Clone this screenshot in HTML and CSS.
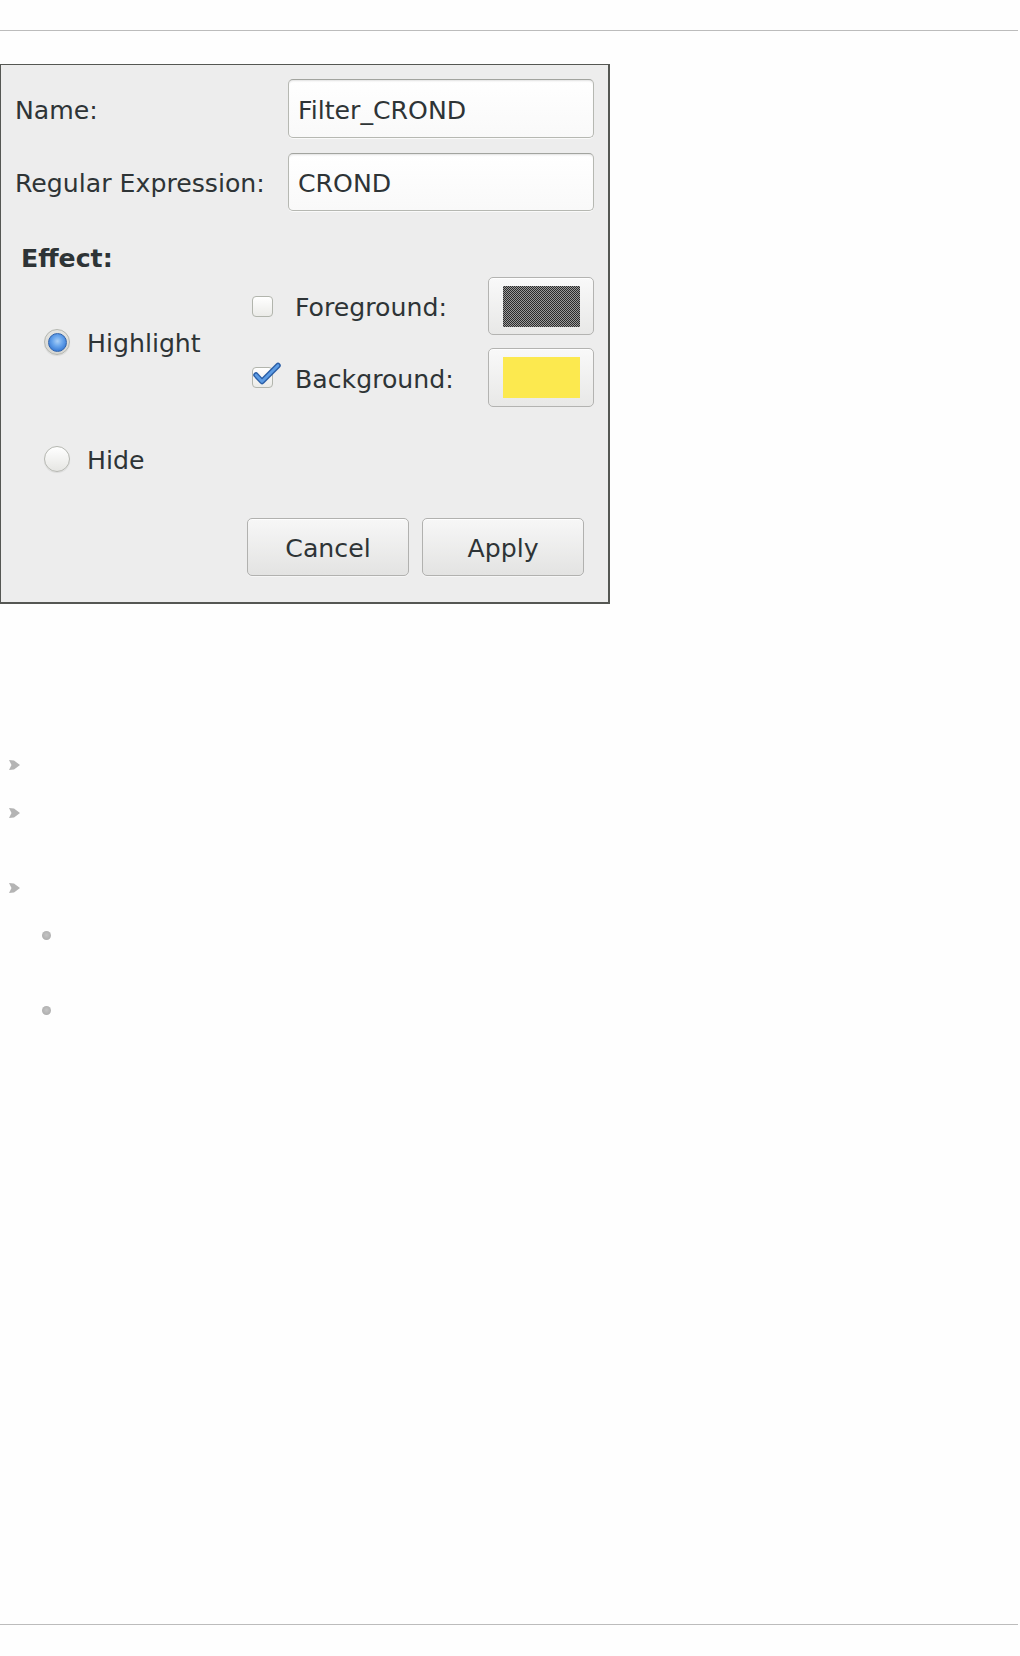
FILE: index.html
```html
<!DOCTYPE html>
<html lang="en">
<head>
<meta charset="utf-8">
<title>Filter</title>
<link rel="stylesheet" href="styles.css">
</head>
<body>
<div class="page">
  <div class="rule rule-top"></div>

  <div class="dialog">
    <div class="fields">
      <span class="field-label txt">Name:</span>
      <div class="entry">Filter_CROND</div>
      <span class="field-label txt">Regular Expression:</span>
      <div class="entry">CROND</div>
    </div>

    <div class="effect-title">Effect:</div>

    <div class="effect-body">
      <div class="radio-row">
        <span class="radio checked"><span class="dot"></span></span>
        <span class="txt">Highlight</span>
      </div>
      <div class="colors">
        <span class="check"></span>
        <span class="clabel txt">Foreground:</span>
        <span class="color-btn"><span class="swatch dither"></span></span>

        <span class="check checked">
          <svg class="tick" width="32" height="26" viewBox="0 0 32 26">
            <path d="M5 13 L11 19.5 L27 3.5" fill="none" stroke="#2b5ea6" stroke-width="5.5" stroke-linecap="round" stroke-linejoin="round"/>
            <path d="M5 13 L11 19.5 L27 3.5" fill="none" stroke="#5d9ce4" stroke-width="2.6" stroke-linecap="round" stroke-linejoin="round"/>
          </svg>
        </span>
        <span class="clabel txt">Background:</span>
        <span class="color-btn"><span class="swatch yellow"></span></span>
      </div>
    </div>

    <div class="radio-row hide-row">
      <span class="radio"></span>
      <span class="txt">Hide</span>
    </div>

    <div class="actions">
      <button class="btn" type="button">Cancel</button>
      <button class="btn" type="button">Apply</button>
    </div>
  </div>

  <ul class="list">
    <li class="item">
      <svg class="arrow" width="11" height="10" viewBox="0 0 11 10"><polygon points="0,0 5,0.5 11,5 5,9.5 0,10 2.5,5" fill="#b4b4b4"/></svg>
    </li>
    <li class="item tall">
      <svg class="arrow" width="11" height="10" viewBox="0 0 11 10"><polygon points="0,0 5,0.5 11,5 5,9.5 0,10 2.5,5" fill="#b4b4b4"/></svg>
    </li>
    <li class="item open">
      <svg class="arrow" width="11" height="10" viewBox="0 0 11 10"><polygon points="0,0 5,0.5 11,5 5,9.5 0,10 2.5,5" fill="#b4b4b4"/></svg>
      <ul class="sublist">
        <li class="subitem tall"><span class="circle"></span></li>
        <li class="subitem"><span class="circle"></span></li>
      </ul>
    </li>
  </ul>

  <div class="rule rule-bottom"></div>
</div>
</body>
</html>
```

FILE: styles.css
```css
html, body {
  margin: 0;
  padding: 0;
  background: #fefefe;
}

body {
  font-family: "DejaVu Sans", "Liberation Sans", sans-serif;
  font-size: 25.2px;
  line-height: 30px;
  color: #2e3436;
}

.page {
  display: flex;
  flex-direction: column;
  min-height: 1656px;
  box-sizing: border-box;
}

.rule {
  border-top: 1px solid #bcbcbc;
  margin-right: 2px;
}

.rule-top {
  margin-top: 30px;
}

.rule-bottom {
  margin-top: auto;
  margin-bottom: 31px;
}

/* text sits slightly low, as in the original toolkit font */
.txt {
  padding-top: 4px;
}

/* dialog */
.dialog {
  margin-top: 33px;
  width: 610px;
  box-sizing: border-box;
  background: #ededed;
  border-style: solid;
  border-color: #555753;
  border-width: 1px 2px 2px 1px;
  padding: 14px 14px 26px 14px;
}

.fields {
  display: grid;
  grid-template-columns: 273px 306px;
  grid-template-rows: 59px 58px;
  row-gap: 15px;
  align-items: center;
}

.field-label {
  white-space: nowrap;
}

.entry {
  height: 100%;
  box-sizing: border-box;
  display: flex;
  align-items: center;
  padding: 4px 0 0 9px;
  border: 1px solid #b6b8b2;
  border-top-color: #a2a49f;
  border-radius: 5px;
  background: linear-gradient(#ffffff, #f9f9f9);
  box-shadow: inset 0 2px 2px -1px rgba(0, 0, 0, 0.12), 0 1px 0 rgba(255, 255, 255, 0.7);
}

.effect-title {
  margin-top: 33px;
  padding-left: 6px;
  font-weight: bold;
}

.effect-body {
  margin-top: 3px;
  display: flex;
  align-items: center;
  padding-left: 29px;
}

.radio-row {
  display: flex;
  align-items: center;
  gap: 17px;
  width: 208px;
  height: 30px;
}

.hide-row {
  margin-top: 37px;
  padding-left: 29px;
}

.radio {
  width: 26px;
  height: 26px;
  flex: none;
  box-sizing: border-box;
  border-radius: 50%;
  border: 1px solid #b5b7b1;
  background: linear-gradient(#ffffff, #e6e6e3);
  box-shadow: 0 1px 1px rgba(0, 0, 0, 0.08);
  display: flex;
  align-items: center;
  justify-content: center;
}

.radio.checked {
  background: linear-gradient(#e4e4e1, #d6d6d2);
}

.dot {
  width: 19px;
  height: 19px;
  box-sizing: border-box;
  border-radius: 50%;
  border: 1px solid #2f63ad;
  background: radial-gradient(circle at 50% 42%, #a9cff7 0, #6aa6ec 38%, #3678d4 80%, #2c66bd 100%);
}

.colors {
  display: grid;
  grid-template-columns: 43px 193px 106px;
  grid-template-rows: 58px 59px;
  row-gap: 13px;
  align-items: center;
}

.check {
  position: relative;
  width: 21px;
  height: 21px;
  box-sizing: border-box;
  border: 1px solid #b2b5ad;
  border-radius: 4px;
  background: linear-gradient(#ffffff, #ebebe8);
}

.tick {
  position: absolute;
  left: -2px;
  top: -6px;
  overflow: visible;
}

.clabel {
  white-space: nowrap;
}

.color-btn {
  height: 100%;
  box-sizing: border-box;
  display: flex;
  align-items: center;
  justify-content: center;
  border: 1px solid #b3b3b1;
  border-radius: 5px;
  background: linear-gradient(#f9f9f9, #e8e8e7);
  box-shadow: inset 0 1px 0 rgba(255, 255, 255, 0.8);
}

.swatch {
  width: 77px;
  height: 41px;
}

.swatch.dither {
  background-color: #666;
  background-image: repeating-conic-gradient(#2a2a2a 0 25%, #9a9a9a 0 50%);
  background-size: 2px 2px;
}

.swatch.yellow {
  background: #fce94f;
}

.actions {
  margin-top: 44px;
  display: flex;
  justify-content: flex-end;
  gap: 13px;
  padding-right: 10px;
}

.btn {
  width: 162px;
  height: 58px;
  box-sizing: border-box;
  font-family: "DejaVu Sans", "Liberation Sans", sans-serif;
  font-size: 25.2px;
  color: #2e3436;
  border: 1px solid #b1b1af;
  border-radius: 5px;
  background: linear-gradient(#f7f7f7, #e3e3e2);
  box-shadow: inset 0 1px 0 rgba(255, 255, 255, 0.8), 0 1px 0 rgba(255, 255, 255, 0.5);
  padding: 3px 0 0 0;
}

/* bullet list */
.list {
  list-style: none;
  margin: 151px 0 0 0;
  padding: 0 0 0 9px;
}

.item {
  box-sizing: border-box;
  height: 48px;
  padding-top: 5px;
}

.item.tall {
  height: 75px;
}

.item.open {
  height: auto;
}

.arrow {
  display: block;
}

.sublist {
  list-style: none;
  margin: 33px 0 0 0;
  padding: 0 0 0 33px;
}

.subitem {
  box-sizing: border-box;
  height: 48px;
  padding-top: 5px;
}

.subitem.tall {
  height: 75px;
}

.circle {
  display: block;
  width: 9px;
  height: 9px;
  border-radius: 50%;
  background: radial-gradient(circle at 50% 45%, #c4c4c4, #a6a6a6);
}
```
